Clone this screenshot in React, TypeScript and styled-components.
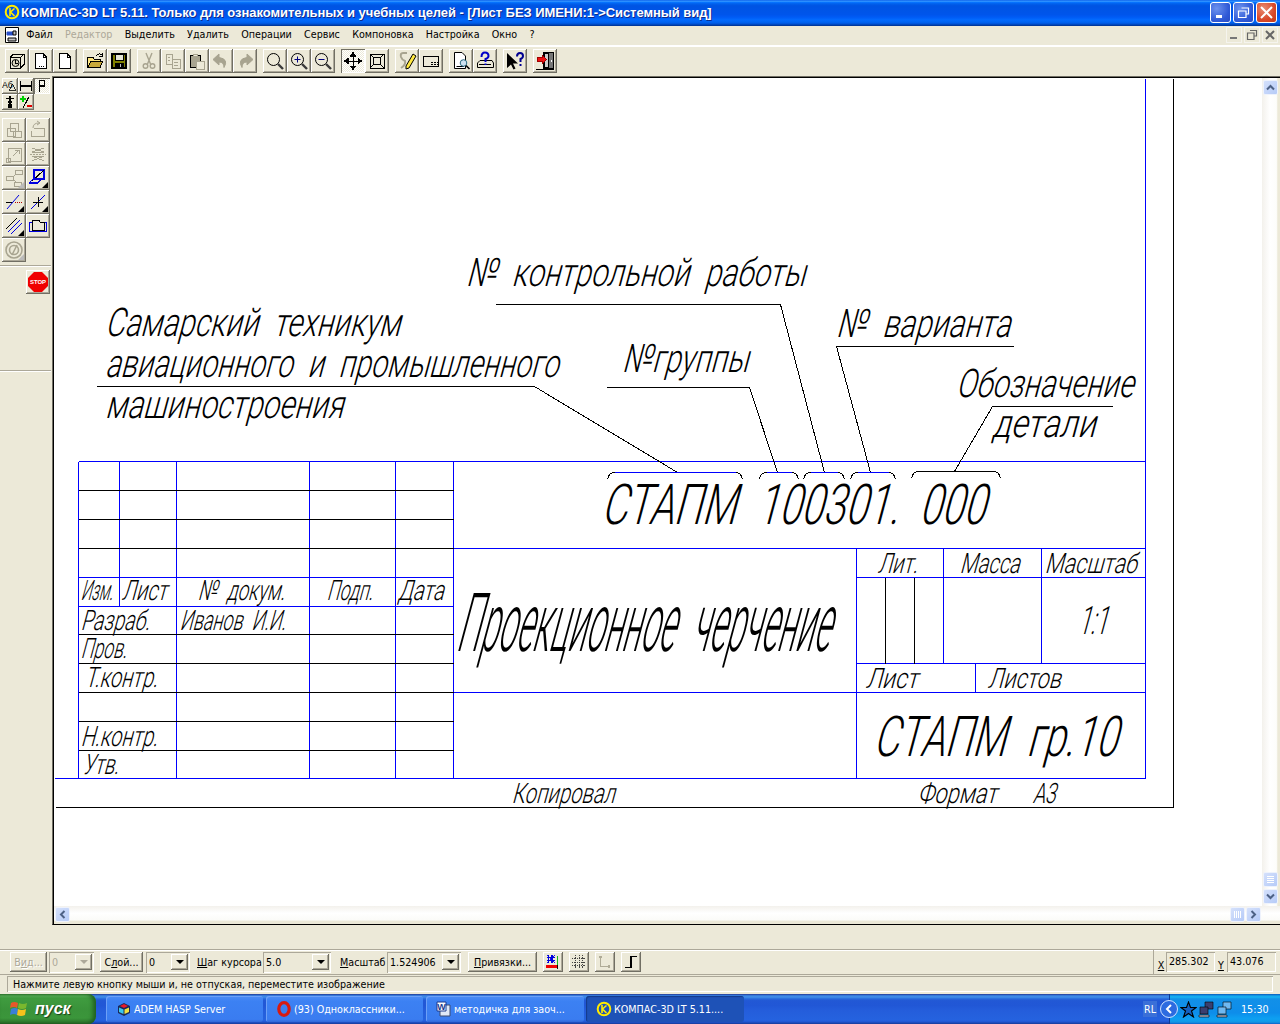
import React from "react";
import styled, { createGlobalStyle, css } from "styled-components";

const Global = createGlobalStyle`
  html, body { margin: 0; padding: 0; width: 1280px; height: 1024px; overflow: hidden; background: #ece9d8; }
`;

const UI = `"DejaVu Sans Condensed", "DejaVu Sans", "Liberation Sans", sans-serif`;

const Page = styled.div`
  width: 1280px; height: 1024px; display: flex; flex-direction: column; overflow: hidden;
  background: #ece9d8; color: #000; font-family: ${UI}; font-size: 10.65px;
`;

/* ---------- title bar ---------- */
const TitleBar = styled.header`
  height: 26px; flex: none; display: flex; align-items: center; padding: 0 3px 2px 4px; box-sizing: border-box;
  background: linear-gradient(#0058e6 0, #3a93ff 4%, #288eff 6%, #127dff 8%, #036ffc 10%, #0262ee 14%, #0057e5 20%, #0054e3 24%, #0055eb 56%, #005bf5 66%, #026afe 76%, #0062ef 86%, #0052d6 92%, #0040ab 96%, #003092 100%);
`;
const TitleText = styled.div`
  flex: 1; margin-left: 1px; color: #fff; font: bold 13px "Liberation Sans", sans-serif; letter-spacing: -0.06px;
  text-shadow: 1px 1px 0 #0f2a8a; white-space: nowrap;
`;
const WinButtons = styled.div`display: flex; gap: 2px;`;
const WinBtn = styled.div<{ $close?: boolean }>`
  width: 21px; height: 21px; box-sizing: border-box; border: 1px solid #fff; border-radius: 3px; display: flex; align-items: center; justify-content: center;
  background: ${(p) => (p.$close ? "radial-gradient(circle at 35% 30%, #e88d73, #d9492a 60%, #c33a17)" : "radial-gradient(circle at 30% 30%, #6d92ee, #2f59d6 65%, #2a4cc4)")};
`;

/* ---------- menu ---------- */
const MenuBar = styled.nav`
  height: 21px; flex: none; box-sizing: border-box; display: flex; align-items: center; padding: 0 2px 2px 5px; gap: 12.25px;
  border-bottom: 2px solid #fff;
`;
const MenuItem = styled.span<{ $off?: boolean; $ml?: number }>`
  color: ${(p) => (p.$off ? "#aca899" : "#000")}; margin-left: ${(p) => p.$ml ?? 0}px; white-space: nowrap;
`;
const MdiGroup = styled.div`margin-left: auto; display: flex; gap: 2px;`;
const MdiBtn = styled.div`
  width: 16px; height: 16px; display: flex; align-items: center; justify-content: center; box-shadow: inset 0 0 0 1px #f5f4ee;
`;

/* ---------- tool buttons ---------- */
const raised = css`box-shadow: inset -1px -1px 0 #716f64, inset 1px 1px 0 #fff, inset -2px -2px 0 #aca899;`;
const sunken = css`box-shadow: inset 1px 1px 0 #aca899, inset -1px -1px 0 #fff;`;
const dither = css`background: repeating-conic-gradient(#fff 0 25%, #ece9d8 0 50%) 0 0 / 2px 2px;`;

const ToolBar = styled.div`
  height: 29px; flex: none; box-sizing: border-box; padding: 2px 0 0 5px; display: flex; gap: 6px;
`;
const BtnGroup = styled.div`display: flex;`;
const IconBtn = styled.div<{ $on?: boolean; $w?: number; $h?: number; $corner?: string }>`
  position: relative; width: ${(p) => p.$w ?? 24}px; height: ${(p) => p.$h ?? 24}px; flex: none; display: flex; align-items: center; justify-content: center;
  background: #ece9d8; ${raised}
  ${(p) => p.$on && css`${dither} box-shadow: inset 1px 1px 0 #716f64, inset -1px -1px 0 #fff;`}
  ${(p) => p.$corner && css`&::after { content: ""; position: absolute; right: 2px; bottom: 2px; border: 3px solid transparent; border-right-color: ${p.$corner}; border-bottom-color: ${p.$corner}; }`}
`;

/* ---------- workspace ---------- */
const Workspace = styled.main`height: 849px; flex: none; display: flex;`;
const SidePanel = styled.aside`width: 52px; flex: none; padding-top: 2px; box-sizing: border-box; display: flex; flex-direction: column;`;
const TabGrid = styled.div`padding-left: 2px; display: grid; grid-template-columns: repeat(3, 16px); grid-auto-rows: 16px;`;
const PanelRule = styled.div<{ $top: number; $bottom: number }>`
  height: 2px; margin: ${(p) => p.$top}px 1px ${(p) => p.$bottom}px 0; background: linear-gradient(#aca899 50%, #fff 50%);
`;
const ToolGrid = styled.div`padding-left: 2px; display: grid; grid-template-columns: repeat(2, 24px); grid-auto-rows: 24px;`;
const StopRow = styled.div`padding-left: 26px; height: 100px; box-sizing: border-box;`;

const Canvas = styled.section`
  flex: 1; display: flex; flex-direction: column; background: #fff;
  border-left: 1px solid #716f64; border-top: 1px solid #716f64; border-bottom: 1px solid #000;
  box-shadow: inset 1px 1px 0 #000;
  padding: 1px 0 0 1px; min-width: 0;
`;
const CanvasTop = styled.div`flex: 1; display: flex; min-height: 0;`;
const Sheet = styled.svg`width: 1208px; height: 828px; flex: none; display: block; background: #fff;`;
const VScroll = styled.div`
  width: 18px; flex: none; box-sizing: border-box; padding: 2px 2px 2px 1px; display: flex; flex-direction: column; justify-content: space-between;
  background: linear-gradient(to right, #f3f1ec, #fff 45%, #fdfdfb 80%, #ece9d8 88%);
`;
const HScroll = styled.div`
  height: 18px; flex: none; box-sizing: border-box; padding: 1px 19px 3px 1px; display: flex;
  background: linear-gradient(#f3f1ec, #fff 40%, #fbfbf8 78%, #ece9d8 84%);
`;
const ScrollEnd = styled.div`display: flex; flex-direction: column; gap: 2px;`;
const ScrollEndH = styled.div`display: flex; margin-left: auto; gap: 1px;`;
const ScrollBtn = styled.div`
  width: 15px; height: 15px; border: 1px solid #eef2fc; border-radius: 2px; box-sizing: border-box; flex: none; display: flex; align-items: center; justify-content: center;
  background: linear-gradient(135deg, #d4e0fb, #b6cbf8);
`;

/* ---------- bottom bars ---------- */
const BlankBand = styled.div`height: 24px; flex: none;`;
const ParamBar = styled.div`
  height: 26px; flex: none; box-sizing: border-box; display: flex; align-items: center; padding-left: 10px;
  border-top: 1px solid #aca899; box-shadow: inset 0 1px 0 #fff;
  border-bottom: 1px solid #aca899;
`;
const TextBtn = styled.div<{ $w: number; $ml?: number; $off?: boolean }>`
  width: ${(p) => p.$w}px; margin-left: ${(p) => p.$ml ?? 0}px; height: 20px; box-sizing: border-box; flex: none;
  display: flex; align-items: center; justify-content: center; white-space: nowrap; ${raised}
  color: ${(p) => (p.$off ? "#aca899" : "#000")};
  ${(p) => p.$off && css`text-shadow: 1px 1px 0 #fff;`}
`;
const SmallBtn = styled(IconBtn)`margin-left: 6px; height: 20px; width: 20px;`;
const Combo = styled.div<{ $w: number; $ml?: number; $off?: boolean }>`
  width: ${(p) => p.$w}px; margin-left: ${(p) => p.$ml ?? 0}px; height: 21px; box-sizing: border-box; flex: none; display: flex; align-items: center; justify-content: space-between;
  padding: 2px 2px 2px 3px; ${sunken}
  color: ${(p) => (p.$off ? "#aca899" : "#000")}; white-space: nowrap;
`;
const ComboArrow = styled.div<{ $off?: boolean }>`
  width: 17px; height: 16px; ${raised} display: flex; align-items: center; justify-content: center;
  &::after { content: ""; border: 4px solid transparent; border-top: 4px solid ${(p) => (p.$off ? "#aca899" : "#000")}; border-bottom: 0; }
`;
const FieldLabel = styled.span<{ $w: number; $ml?: number }>`
  width: ${(p) => p.$w}px; margin-left: ${(p) => p.$ml ?? 0}px; flex: none; white-space: nowrap;
`;
const CoordGroup = styled.div`
  margin-left: auto; width: 127px; height: 24px; box-sizing: border-box; border-left: 1px solid #aca899; padding-left: 2px; display: flex; align-items: center;
`;
const CoordField = styled.div`
  width: 49px; height: 20px; box-sizing: border-box; flex: none; padding: 3px 3px; ${sunken}
`;
const CoordLabel = styled.span<{ $w: number }>`width: ${(p) => p.$w}px; flex: none; text-align: center; position: relative; top: 3px;`;
const StatusRow = styled.div`
  height: 19px; flex: none; box-sizing: border-box; padding: 1px 7px 2px 7px;
`;
const StatusField = styled.div`
  height: 16px; box-sizing: border-box; padding: 2px 6px; box-shadow: inset 1px 1px 0 #aca899, inset -1px -1px 0 #fff; white-space: nowrap;
`;

/* ---------- taskbar ---------- */
const TaskBar = styled.footer`
  height: 30px; flex: none; display: flex; align-items: center; color: #fff;
  background: linear-gradient(#1f2f86 0, #3165c4 3%, #3682e5 6%, #4490e6 10%, #3883e5 12%, #2b71e0 15%, #2663da 18%, #235bd6 20%, #2258d5 23%, #2157d6 38%, #245ddb 54%, #2562df 86%, #245fdc 89%, #2158d4 92%, #1d4ec0 95%, #1941a5 98%);
`;
const StartBtn = styled.div`
  width: 96px; height: 30px; flex: none; box-sizing: border-box; padding-left: 10px; display: flex; align-items: center; gap: 7px; border-radius: 0 8px 8px 0;
  background: linear-gradient(#388438 0, #5ab25a 6%, #409c40 14%, #3a933a 50%, #3b963b 80%, #2f7a2f 94%, #235a23 100%);
  box-shadow: inset -3px 0 4px #1f5f1f;
`;
const StartText = styled.span`
  font: italic bold 16px "Liberation Sans", sans-serif; color: #fff; text-shadow: 1px 1px 1px #18401a;
`;
const TaskBtn = styled.div<{ $active?: boolean; $ml: number; $w: number }>`
  width: ${(p) => p.$w}px; margin-left: ${(p) => p.$ml}px; height: 26px; flex: none; box-sizing: border-box; padding-left: 10px; display: flex; align-items: center; gap: 2px; border-radius: 3px; white-space: nowrap;
  background: ${(p) => (p.$active ? "#1e52b7" : "linear-gradient(#4d8ef5, #3c81f3 20%, #3a7cf0 90%, #3068d8)")};
  box-shadow: ${(p) => (p.$active ? "inset 1px 1px 1px #143a8a" : "inset 1px 1px 0 #6da0f7")};
`;
const LangBox = styled.div`
  margin-left: auto; width: 14px; height: 16px; display: flex; align-items: center; justify-content: center; background: #3a6fd8;
`;
const TrayChevron = styled.div`
  width: 18px; height: 18px; margin-left: 3px; margin-right: -9px; z-index: 1; flex: none; box-sizing: border-box; border: 1px solid #cfe2ff; border-radius: 50%; display: flex; align-items: center; justify-content: center; background: #2d6be0;
`;
const Tray = styled.div`
  width: 111px; height: 30px; flex: none; box-sizing: border-box; display: flex; align-items: center; padding-left: 10px; gap: 1px; border-left: 1px solid #0c3b97;
  background: linear-gradient(to bottom, #0c59b9, #139ee9 6%, #18b5f2 10%, #139beb 14%, #1290e8 19%, #0d8dea 63%, #0d9ff1 81%, #0f9eed 88%, #119be9 91%, #1392e2 94%, #137ed7 97%, #095bc9);
`;
const Clock = styled.span`margin-left: 7px;`;

/* ---------- drawing ---------- */
const DrawLine = styled.line<{ $c?: string }>`
  stroke: ${(p) => p.$c ?? "#000"}; stroke-width: 1; shape-rendering: crispEdges;
`;
const DrawPath = styled.path<{ $c?: string }>`
  stroke: ${(p) => p.$c ?? "#000"}; stroke-width: 1; fill: none; shape-rendering: crispEdges;
`;
const GostText = styled.text`
  font-family: Roboto, "Liberation Sans", sans-serif; font-weight: 300; fill: #000; white-space: pre; word-spacing: 0.28em;
`;

const BLUE = "#0000ff";
const STRETCH = 1.6;

type L = [number, number, number, number, string?];
const lines: L[] = [
  [1145, 78, 1145, 778, BLUE], [1173, 78, 1173, 807], [55, 807, 1173, 807], [54, 778, 1145, 778, BLUE],
  [78, 461, 1145, 461, BLUE], [78, 461, 78, 778, BLUE], [119, 461, 119, 606, BLUE],
  [176, 461, 176, 778, BLUE], [309, 461, 309, 778, BLUE], [395, 461, 395, 778, BLUE], [453, 461, 453, 778, BLUE],
  [78, 490, 453, 490], [78, 519, 453, 519], [78, 548, 453, 548], [453, 548, 1145, 548, BLUE],
  [78, 577, 453, 577, BLUE], [78, 606, 453, 606, BLUE],
  [78, 634, 453, 634], [78, 663, 453, 663], [78, 692, 453, 692], [78, 721, 453, 721], [78, 750, 453, 750],
  [453, 692, 1145, 692, BLUE], [856, 548, 856, 778, BLUE], [856, 577, 1145, 577, BLUE], [856, 663, 1145, 663, BLUE],
  [943, 548, 943, 663, BLUE], [1041, 548, 1041, 663, BLUE], [885, 577, 885, 663], [914, 577, 914, 663], [975, 663, 975, 692, BLUE],
  [96, 386, 534, 386], [534, 386, 677, 472],
  [495, 304, 780, 304], [780, 304, 824, 472],
  [606, 387, 749, 387], [749, 387, 777, 472],
  [836, 346, 1013, 346], [836, 346, 870, 472],
  [992, 406, 1112, 406], [992, 406, 954, 471],
];

const brackets: [number, number, number, boolean][] = [
  [607, 742, 472, true], [759, 798, 472, true], [803, 844, 472, true], [850, 895, 472, true], [911, 1000, 471, false],
];

type T = [string, number, number, number, number];
/* text, left, right, baseline, cap height */
const texts: T[] = [
  ["№ контрольной работы", 468, 810, 286, 28],
  ["Самарский техникум", 107, 405, 336, 28],
  ["авиационного и промышленного", 107, 563, 377, 28],
  ["машиностроения", 107, 348, 418, 28],
  ["№группы", 624, 753, 372, 28],
  ["№ варианта", 838, 1015, 337, 28],
  ["Обозначение", 958, 1138, 397, 28],
  ["детали", 994, 1100, 437, 28],
  ["СТАПМ 100301. 000", 604, 992, 524, 40],
  ["Изм.", 82, 116, 600, 20], ["Лист", 123, 170, 600, 20], ["№ докум.", 199, 288, 600, 20],
  ["Подп.", 328, 376, 600, 20], ["Дата", 399, 447, 600, 20],
  ["Разраб.", 82, 153, 630, 20], ["Иванов И.И.", 181, 289, 630, 20], ["Пров.", 82, 130, 658, 20],
  ["Т.контр.", 86, 161, 687, 20], ["Н.контр.", 82, 161, 746, 20], ["Утв.", 84, 122, 774, 20],
  ["Проекционное черчение", 460, 839, 651, 58],
  ["Лит.", 879, 921, 573, 20], ["Масса", 961, 1023, 573, 20], ["Масштаб", 1046, 1140, 573, 20], ["1:1", 1080, 1112, 634, 28],
  ["Лист", 867, 921, 688, 20], ["Листов", 989, 1064, 688, 20],
  ["СТАПМ гр.10", 876, 1124, 756, 40],
  ["Копировал", 513, 618, 803, 20], ["Формат", 919, 1000, 803, 20], ["А3", 1034, 1059, 803, 20],
];

function Drawing() {
  return (
    <Sheet viewBox="54 78 1208 828">
      {lines.map(([a, b, c, d, col], i) => (
        <DrawLine key={i} x1={a + 0.5} y1={b + 0.5} x2={c + 0.5} y2={d + 0.5} $c={col} />
      ))}
      {brackets.map(([a, b, y, blue], i) => (
        <g key={i} transform="translate(0.5 0.5)">
          <DrawPath d={`M${a} ${y + 7}Q${a + 1} ${y} ${a + 7} ${y}`} />
          <DrawPath d={`M${b - 7} ${y}Q${b - 1} ${y} ${b} ${y + 7}`} />
          <DrawPath d={`M${a + 7} ${y}H${b - 7}`} $c={blue ? BLUE : "#000"} />
        </g>
      ))}
      {texts.map(([s, x1, x2, base, cap], i) => (
        <GostText
          key={i}
          transform={`translate(${x1 - cap * 0.08} ${base}) skewX(-15) scale(1 ${STRETCH})`}
          fontSize={cap / 0.711 / STRETCH}
          textLength={x2 - x1 - cap * 0.1}
          lengthAdjust="spacingAndGlyphs"
        >
          {s}
        </GostText>
      ))}
    </Sheet>
  );
}

/* ---------- icons ---------- */
const Svg = ({ children, s = 20 }: { children: React.ReactNode; s?: number }) => (
  <svg width={s} height={s} viewBox="0 0 20 20" fill="none" stroke="#000" strokeWidth="1" shapeRendering="crispEdges">
    {children}
  </svg>
);
const GR = "#a8a490";

const KompasLogo = ({ s = 16 }: { s?: number }) => (
  <svg width={s} height={s} viewBox="0 0 16 16" fill="none">
    <circle cx="8" cy="8" r="6.3" stroke="#ffec00" strokeWidth="2" />
    <path d="M6 4v8M10.5 4.5L6.5 8l4 4" stroke="#ffec00" strokeWidth="1.6" />
  </svg>
);

const icons: Record<string, React.ReactNode> = {
  model: (
    <Svg>
      <path d="M3 6.5L6.5 3H17V13.5L13.5 17H3Z" fill="#ece9d8" />
      <path d="M3 6.5H13.5V17M13.5 6.5L17 3" />
      <circle cx="8.5" cy="12" r="3.5" fill="#d8d4c0" stroke="#000" shapeRendering="auto" />
      <path d="M8.5 12V9M8.5 12L11 13" />
    </Svg>
  ),
  sheet: (
    <Svg>
      <path d="M4.5 2.5H12L15.5 6V17.5H4.5Z" fill="#fff" />
      <path d="M12 2.5V6H15.5" />
      <path d="M8 15.5H14" strokeDasharray="1 1" />
    </Svg>
  ),
  blank: (
    <Svg>
      <path d="M4.5 2.5H12L15.5 6V17.5H4.5Z" fill="#fff" />
      <path d="M12 2.5V6H15.5" />
    </Svg>
  ),
  open: (
    <Svg>
      <path d="M2.5 6.5H8L9 8H15V10H6L2.5 16.5Z" fill="#ffe680" />
      <path d="M2.5 16.5L6 10H18L15 16.5Z" fill="#c9a93a" />
      <path d="M11 5Q14 1.5 17 4M17 2V5H14" stroke="#000" />
    </Svg>
  ),
  save: (
    <Svg>
      <path d="M3 3H17V17H3Z" fill="#808000" stroke="#000" strokeWidth="1.4" />
      <path d="M6 3.5H14V9H6Z" fill="#e8e8d8" />
      <path d="M6 12H14V17H6Z" fill="#000" />
      <path d="M11 13V16" stroke="#c0c0c0" />
    </Svg>
  ),
  cut: (
    <Svg>
      <g stroke={GR} shapeRendering="auto" strokeWidth="1.4">
        <path d="M7 2L11.5 13M13 2L8.5 13" />
        <circle cx="6.5" cy="15" r="2.3" />
        <circle cx="13.5" cy="15" r="2.3" />
      </g>
    </Svg>
  ),
  copy: (
    <Svg>
      <g stroke={GR}>
        <path d="M3 3H9V13H3Z" />
        <path d="M9 8H17V17H9Z" />
        <path d="M5 6H7M5 9H7M11 11H15M11 14H15" />
      </g>
    </Svg>
  ),
  paste: (
    <Svg>
      <path d="M3 4H13V16H3Z" fill={GR} />
      <path d="M6 3H10V5H6Z" fill="#ece9d8" stroke={GR} />
      <path d="M9 10H17V18H9Z" fill="#ece9d8" stroke={GR} />
    </Svg>
  ),
  undo: (
    <Svg>
      <path d="M8 3L2 8.5L8 14V11Q13 11 13 16.5Q18 8 8 6.5Z" fill={GR} stroke={GR} shapeRendering="auto" />
    </Svg>
  ),
  redo: (
    <Svg>
      <path d="M12 3L18 8.5L12 14V11Q7 11 7 16.5Q2 8 12 6.5Z" fill={GR} stroke={GR} shapeRendering="auto" />
    </Svg>
  ),
  zoom: (
    <svg width="20" height="20" viewBox="0 0 20 20" fill="none" stroke="#000">
      <circle cx="8.5" cy="8.5" r="6" />
      <path d="M13 13L18 18" strokeWidth="2.4" stroke="#3a3a3a" />
    </svg>
  ),
  zoomin: (
    <svg width="20" height="20" viewBox="0 0 20 20" fill="none" stroke="#000">
      <circle cx="8.5" cy="8.5" r="6" />
      <path d="M5.5 8.5H11.5M8.5 5.5V11.5" stroke="#000080" />
      <path d="M13 13L18 18" strokeWidth="2.4" stroke="#3a3a3a" />
    </svg>
  ),
  zoomout: (
    <svg width="20" height="20" viewBox="0 0 20 20" fill="none" stroke="#000">
      <circle cx="8.5" cy="8.5" r="6" />
      <path d="M5.5 8.5H11.5" stroke="#000080" />
      <path d="M13 13L18 18" strokeWidth="2.4" stroke="#3a3a3a" />
    </svg>
  ),
  move: (
    <Svg>
      <path d="M10 2V18M2 10H18" strokeWidth="1" />
      <path d="M10 1.5L7.5 5H12.5ZM10 18.5L7.5 15H12.5ZM1.5 10L5 7.5V12.5ZM18.5 10L15 7.5V12.5Z" fill="#000" />
    </Svg>
  ),
  fit: (
    <Svg>
      <path d="M3 3H17V17H3Z" />
      <path d="M6.5 6.5H13.5V13.5H6.5Z" />
      <path d="M3 3L6.5 6.5M17 3L13.5 6.5M3 17L6.5 13.5M17 17L13.5 13.5" />
    </Svg>
  ),
  pencil: (
    <svg width="20" height="20" viewBox="0 0 20 20" fill="none">
      <path d="M10 2H6Q3 2 4 6Q5 9 8 10Q9 14 4 17" stroke={GR} strokeWidth="2" />
      <path d="M9 15L16 3L19 5L12 17L9 18Z" fill="#ffe840" stroke="#000" />
    </svg>
  ),
  layout: (
    <Svg>
      <path d="M2.5 5.5H17.5V15.5H2.5Z" />
      <path d="M10 13.5H17M10 11.5H17" strokeDasharray="2 1" />
    </Svg>
  ),
  preview: (
    <svg width="20" height="20" viewBox="0 0 20 20" fill="none" stroke="#000">
      <path d="M3.5 1.5H11L14.5 5V17.5H3.5Z" fill="#fff" />
      <path d="M5.5 15.5H13" />
      <circle cx="12.5" cy="12" r="3.3" fill="#cfe3f2" stroke="#2a6a80" />
      <path d="M15 14.5L18.5 18" strokeWidth="1.6" />
    </svg>
  ),
  printhelp: (
    <svg width="20" height="20" viewBox="0 0 20 20" fill="none" stroke="#000">
      <path d="M2.5 12L5 9.5H17L18.5 12V16.5H2.5Z" fill="#ece9d8" />
      <path d="M4 13.5H16" />
      <path d="M6.5 6Q6.5 1.5 10 1.5Q13.5 1.5 13.5 5Q13.5 7 10.5 8V11M10.5 12.5V14" stroke="#0000c8" strokeWidth="2" />
    </svg>
  ),
  whatis: (
    <svg width="20" height="20" viewBox="0 0 20 20" fill="none">
      <path d="M2 2V17L6 13.5L8.5 18.5L10.5 17.5L8 12.5H13Z" fill="#000" />
      <path d="M12 5.5Q12 2 15 2Q18 2 18 5Q18 7 15.5 8V11M15.5 13V15" stroke="#000090" strokeWidth="2" />
    </svg>
  ),
  exit: (
    <svg width="20" height="20" viewBox="0 0 20 20" fill="none" stroke="#000" shapeRendering="crispEdges">
      <path d="M8 1.5H18.5V17.5H8Z" fill="#777" />
      <path d="M9 2.5H13V16H9Z" fill="#ccc" />
      <path d="M16.5 9V11" stroke="#fff" />
      <path d="M1 18.5H19" />
      <path d="M2 6.5H7V4L11.5 8.5L7 13V10.5H2Z" fill="#ee1010" stroke="#a00000" />
    </svg>
  ),
  /* side panel */
  t1: (
    <Svg s={16}>
      <text x="0" y="13" fontSize="11" fontFamily="Liberation Sans" fill="#000" stroke="none">Аб</text>
      <path d="M9 15L13 8L17 15Z" />
    </Svg>
  ),
  t2: (
    <Svg s={16}>
      <path d="M3 4V16M17 4V16M3 10H17" strokeWidth="1.6" />
    </Svg>
  ),
  t3: (
    <Svg s={16}>
      <path d="M7 3V17M7 3.5H13V10H7" strokeWidth="1.5" />
    </Svg>
  ),
  t4: (
    <Svg s={16}>
      <path d="M10 2V17M5 6H15M7 10H13" strokeWidth="1.5" />
      <path d="M8 13H12V17H8Z" fill="#000" />
    </Svg>
  ),
  t5: (
    <Svg s={16}>
      <path d="M6 2V10M2 6H10" stroke="#00d000" strokeWidth="3" />
      <path d="M6 18L14 3" strokeWidth="1.3" />
      <path d="M11 15H18" stroke="#e00000" strokeWidth="2.4" />
    </Svg>
  ),
  s1: (
    <Svg>
      <path d="M6 3H14V11H6ZM3 8H11V16H3ZM9 11H17V17H9Z" stroke={GR} />
    </Svg>
  ),
  s2: (
    <Svg>
      <path d="M6 8H16V16H3V11" stroke={GR} />
      <path d="M5 8Q5 3 11 3M9 1L12 3L9 5" stroke={GR} shapeRendering="auto" />
    </Svg>
  ),
  s3: (
    <Svg>
      <path d="M4 4H17V17H4Z M9 12L15 6M11 6H15V10" stroke={GR} />
      <path d="M2 14H6V18H2Z" stroke={GR} />
    </Svg>
  ),
  s4: (
    <Svg>
      <path d="M4 4L16 8H4L16 4M4 17L16 12H4L16 17" stroke={GR} />
      <path d="M2 10H18" stroke={GR} strokeDasharray="2 1" />
    </Svg>
  ),
  s5: (
    <Svg>
      <path d="M11 2H18V6H11ZM2 8H9V12H2ZM10 14H17V18H10ZM9 9L12 6M9 11L12 14" stroke={GR} />
    </Svg>
  ),
  s6: (
    <Svg>
      <path d="M6 2H16V11H6Z" stroke="#0000e0" strokeWidth="1.4" />
      <path d="M16 2L4 13" stroke="#000" />
      <path d="M2 14L5 11H13L10 15H2Z" stroke="#0000e0" strokeWidth="1.4" />
    </Svg>
  ),
  s7: (
    <Svg>
      <path d="M2 10H9" stroke="#000" />
      <path d="M11 10H19" stroke="#b00000" strokeDasharray="1 1" />
      <path d="M3 17L15 3" stroke="#0000e0" shapeRendering="auto" />
    </Svg>
  ),
  s8: (
    <Svg>
      <path d="M3 17L17 3" stroke="#0000e0" shapeRendering="auto" />
      <path d="M10 5V15M5 10H15" stroke="#000" />
    </Svg>
  ),
  s9: (
    <Svg>
      <path d="M2 13L13 2" stroke="#000" shapeRendering="auto" />
      <path d="M4 16L16 4M7 18L18 7" stroke="#0000e0" shapeRendering="auto" />
    </Svg>
  ),
  s10: (
    <Svg>
      <path d="M1.5 6.5H18.5V15.5H1.5Z" stroke="#0000e0" />
      <path d="M4 4H11L12 6H16V14H4Z" stroke="#000" fill="#ece9d8" />
    </Svg>
  ),
  s11: (
    <svg width="20" height="20" viewBox="0 0 20 20" fill="none" stroke={GR} strokeWidth="1.6">
      <circle cx="10" cy="10" r="8" />
      <circle cx="10" cy="10" r="4.5" />
      <path d="M13 5L8 15" />
    </svg>
  ),
  stop: (
    <svg width="20" height="20" viewBox="0 0 20 20">
      <path d="M6 0H14L20 6V14L14 20H6L0 14V6Z" fill="#f00000" />
      <text x="10" y="12" textAnchor="middle" fontSize="6" fontWeight="bold" fontFamily="Liberation Sans" fill="#fff">STOP</text>
    </svg>
  ),
  snap: (
    <Svg s={18}>
      <path d="M3 8H12M3 5H12M5 2V11M9 2V11" stroke="#0000e0" strokeWidth="1.4" />
      <path d="M3 2L12 11M12 2L3 11" stroke="#0000e0" />
      <path d="M15 3V17" stroke="#00b000" />
      <path d="M2 15H16" stroke="#f00000" strokeWidth="2.4" />
      <path d="M15 13V18" stroke="#000" />
    </Svg>
  ),
  grid: (
    <Svg s={18}>
      <path d="M2 6H18M2 10H18M2 14H18M6 2V18M10 2V18M14 2V18" stroke="#333" strokeDasharray="1 1" />
    </Svg>
  ),
  axes: (
    <Svg s={18}>
      <path d="M5 3V15H16" stroke={GR} />
      <path d="M3 6L5 3L7 6M13 13L16 15L13 17" stroke={GR} />
    </Svg>
  ),
  step: (
    <Svg s={18}>
      <path d="M3 16H10V4H17" strokeWidth="1.4" />
    </Svg>
  ),
};

const Ic = ({ n }: { n: string }) => <>{icons[n]}</>;

const TBGroups: { n: string; on?: boolean }[][] = [
  [{ n: "model" }, { n: "sheet" }, { n: "blank" }],
  [{ n: "open" }, { n: "save" }],
  [{ n: "cut" }, { n: "copy" }, { n: "paste" }, { n: "undo" }, { n: "redo" }],
  [{ n: "zoom" }, { n: "zoomin" }, { n: "zoomout" }],
  [{ n: "move", on: true }, { n: "fit" }],
  [{ n: "pencil" }, { n: "layout" }],
  [{ n: "preview" }, { n: "printhelp" }],
  [{ n: "whatis" }],
  [{ n: "exit" }],
];

const menu = ["Файл", "Редактор", "Выделить", "Удалить", "Операции", "Сервис", "Компоновка", "Настройка", "Окно", "?"];
const side: [string, string?][] = [
  ["s1"], ["s2"], ["s3"], ["s4"], ["s5", "#bbb"], ["s6", "#000"], ["s7", "#000"], ["s8", "#000"], ["s9", "#000"], ["s10"], ["s11", "#bbb"],
];

const NetIcon = ({ c }: { c: string }) => (
  <svg width="17" height="17" viewBox="0 0 17 17" stroke="#000" strokeWidth="0.6">
    <path d="M7 1H15V8H7Z" fill={c} />
    <path d="M2 6H10V13H2Z" fill={c} />
    <path d="M1 14H11V16H1Z" fill="#b8b8c8" />
  </svg>
);

export default function App() {
  return (
    <Page>
      <Global />
      <TitleBar>
        <KompasLogo />
        <TitleText>КОМПАС-3D LT 5.11. Только для ознакомительных и учебных целей - [Лист БЕЗ ИМЕНИ:1-&gt;Системный вид]</TitleText>
        <WinButtons>
          <WinBtn>
            <svg width="13" height="13" viewBox="0 0 13 13"><path d="M2 9H8V12H2Z" fill="#fff" /></svg>
          </WinBtn>
          <WinBtn>
            <svg width="13" height="13" viewBox="0 0 13 13" fill="none" stroke="#fff" strokeWidth="1.2"><path d="M4.5 2H11.5V8H9M1.5 5H9V11.5H1.5Z" /></svg>
          </WinBtn>
          <WinBtn $close>
            <svg width="13" height="13" viewBox="0 0 13 13" stroke="#fff" strokeWidth="2"><path d="M1 1L12 12M12 1L1 12" /></svg>
          </WinBtn>
        </WinButtons>
      </TitleBar>
      <MenuBar>
        <svg width="14" height="16" viewBox="0 0 14 16" stroke="#000" fill="#fff">
          <path d="M.5.5H13.5V15.5H.5Z" />
          <path d="M2 5H8V8H2Z" fill="#2a50c8" stroke="#2a50c8" />
          <path d="M8 4H11V8H8ZM3 11H11V14H3Z" fill="#c0c0c0" />
        </svg>
        {menu.map((m, i) => (
          <MenuItem key={m} $off={m === "Редактор"} $ml={i === 0 ? -5 : 0}>{m}</MenuItem>
        ))}
        <MdiGroup>
          <MdiBtn><svg width="12" height="12" viewBox="0 0 12 12"><path d="M2 8H9V10H2Z" fill="#777" /></svg></MdiBtn>
          <MdiBtn><svg width="12" height="12" viewBox="0 0 12 12" fill="none" stroke="#666" strokeWidth="1.2"><path d="M4 1.5H10.5V7H8.5M1.5 4H8V10.5H1.5Z" /></svg></MdiBtn>
          <MdiBtn><svg width="12" height="12" viewBox="0 0 12 12" stroke="#666" strokeWidth="2"><path d="M2 2L10 10M10 2L2 10" /></svg></MdiBtn>
        </MdiGroup>
      </MenuBar>
      <ToolBar>
        {TBGroups.map((g, i) => (
          <BtnGroup key={i}>
            {g.map((b) => (
              <IconBtn key={b.n} $on={b.on}><Ic n={b.n} /></IconBtn>
            ))}
          </BtnGroup>
        ))}
      </ToolBar>
      <Workspace>
        <SidePanel>
          <TabGrid>
            <IconBtn $w={16} $h={16}><Ic n="t1" /></IconBtn>
            <IconBtn $w={16} $h={16}><Ic n="t2" /></IconBtn>
            <IconBtn $w={16} $h={16} $on><Ic n="t3" /></IconBtn>
            <IconBtn $w={16} $h={16}><Ic n="t4" /></IconBtn>
            <IconBtn $w={16} $h={16}><Ic n="t5" /></IconBtn>
          </TabGrid>
          <PanelRule $top={1} $bottom={5} />
          <ToolGrid>
            {side.map(([n, corner]) => (
              <IconBtn key={n} $corner={corner}><Ic n={n} /></IconBtn>
            ))}
          </ToolGrid>
          <PanelRule $top={3} $bottom={3} />
          <StopRow>
            <IconBtn><Ic n="stop" /></IconBtn>
          </StopRow>
          <PanelRule $top={0} $bottom={0} />
        </SidePanel>
        <Canvas>
          <CanvasTop>
            <Drawing />
            <VScroll>
              <ScrollBtn>
                <svg width="9" height="7" viewBox="0 0 9 7" fill="none" stroke="#4d6185" strokeWidth="2"><path d="M1 5.5L4.5 2L8 5.5" /></svg>
              </ScrollBtn>
              <ScrollEnd>
                <ScrollBtn>
                  <svg width="9" height="9" viewBox="0 0 9 9" stroke="#fff"><path d="M1 1.5H8M1 3.5H8M1 5.5H8M1 7.5H8" /></svg>
                </ScrollBtn>
                <ScrollBtn>
                  <svg width="9" height="7" viewBox="0 0 9 7" fill="none" stroke="#4d6185" strokeWidth="2"><path d="M1 1.5L4.5 5L8 1.5" /></svg>
                </ScrollBtn>
              </ScrollEnd>
            </VScroll>
          </CanvasTop>
          <HScroll>
            <ScrollBtn>
              <svg width="7" height="9" viewBox="0 0 7 9" fill="none" stroke="#4d6185" strokeWidth="2"><path d="M5.5 1L2 4.5L5.5 8" /></svg>
            </ScrollBtn>
            <ScrollEndH>
              <ScrollBtn>
                <svg width="9" height="9" viewBox="0 0 9 9" stroke="#fff"><path d="M1.5 1V8M3.5 1V8M5.5 1V8M7.5 1V8" /></svg>
              </ScrollBtn>
              <ScrollBtn>
                <svg width="7" height="9" viewBox="0 0 7 9" fill="none" stroke="#4d6185" strokeWidth="2"><path d="M1.5 1L5 4.5L1.5 8" /></svg>
              </ScrollBtn>
            </ScrollEndH>
          </HScroll>
        </Canvas>
      </Workspace>
      <BlankBand />
      <ParamBar>
        <TextBtn $w={37} $off>В<u>и</u>д...</TextBtn>
        <Combo $w={45} $ml={2} $off>0<ComboArrow $off /></Combo>
        <TextBtn $w={43} $ml={6}>С<u>л</u>ой...</TextBtn>
        <Combo $w={44} $ml={3}>0<ComboArrow /></Combo>
        <FieldLabel $w={66} $ml={7}><u>Ш</u>аг курсора</FieldLabel>
        <Combo $w={68}>5.0<ComboArrow /></Combo>
        <FieldLabel $w={47} $ml={9}><u>М</u>асштаб</FieldLabel>
        <Combo $w={74}>1.524906<ComboArrow /></Combo>
        <TextBtn $w={69} $ml={7}><u>П</u>ривязки...</TextBtn>
        <SmallBtn><Ic n="snap" /></SmallBtn>
        <SmallBtn><Ic n="grid" /></SmallBtn>
        <SmallBtn><Ic n="axes" /></SmallBtn>
        <SmallBtn><Ic n="step" /></SmallBtn>
        <CoordGroup>
          <CoordLabel $w={10}><u>X</u></CoordLabel>
          <CoordField>285.302</CoordField>
          <CoordLabel $w={12}><u>Y</u></CoordLabel>
          <CoordField>43.076</CoordField>
        </CoordGroup>
      </ParamBar>
      <StatusRow>
        <StatusField>Нажмите левую кнопку мыши и, не отпуская, переместите изображение</StatusField>
      </StatusRow>
      <TaskBar>
        <StartBtn>
          <svg width="18" height="18" viewBox="0 0 18 18">
            <path d="M1 3Q4 1 8 3L7 8Q4 6 0 8Z" fill="#e8572a" />
            <path d="M9 3Q13 5 17 3L16 8Q12 10 8 8Z" fill="#7ab82e" />
            <path d="M0 9Q4 7 7 9L6 15Q3 13 -1 15Z" fill="#3b7fd6" transform="translate(1 0)" />
            <path d="M8 9Q12 11 16 9L15 15Q11 17 7 15Z" fill="#f6c21c" />
          </svg>
          <StartText>пуск</StartText>
        </StartBtn>
        <TaskBtn $ml={10} $w={157}>
          <svg width="16" height="16" viewBox="0 0 16 16">
            <path d="M2 5L8 2L14 5V12L8 15L2 12Z" fill="#1b2a5a" />
            <path d="M4 5L8 3L12 5L8 7Z" fill="#e81a2a" />
            <path d="M3 6.5L7.5 8.5V13L3 11Z" fill="#38c8f0" />
            <path d="M8.5 8.5L13 6.5V11L8.5 13Z" fill="#f0e040" />
          </svg>
          ADEM HASP Server
        </TaskBtn>
        <TaskBtn $ml={3} $w={157}>
          <svg width="16" height="16" viewBox="0 0 16 16" fill="none">
            <ellipse cx="8" cy="8" rx="5.2" ry="6.3" stroke="#d81a10" strokeWidth="3.2" />
          </svg>
          (93) Одноклассники...
        </TaskBtn>
        <TaskBtn $ml={3} $w={158}>
          <svg width="16" height="16" viewBox="0 0 16 16">
            <path d="M4 4H14V15H4Z" fill="#dfe8f8" stroke="#3a4a70" />
            <path d="M1 1H10V10H1Z" fill="#fff" stroke="#1a3a90" />
            <text x="5.5" y="9" textAnchor="middle" fontSize="9" fontWeight="bold" fontFamily="Liberation Sans" fill="#1a3a90">W</text>
          </svg>
          методичка для заоч...
        </TaskBtn>
        <TaskBtn $ml={2} $w={158} $active>
          <KompasLogo />
          КОМПАС-3D LT 5.11....
        </TaskBtn>
        <LangBox>RL</LangBox>
        <TrayChevron>
          <svg width="8" height="10" viewBox="0 0 8 10" fill="none" stroke="#fff" strokeWidth="2"><path d="M6 1L2 5L6 9" /></svg>
        </TrayChevron>
        <Tray>
          <svg width="17" height="17" viewBox="0 0 17 17">
            <path d="M8.5 1L10.5 6.5H16L11.5 10L13.5 16L8.5 12.5L3.5 16L5.5 10L1 6.5H6.5Z" fill="#1360c0" stroke="#000" strokeWidth="1.1" />
          </svg>
          <NetIcon c="#3a3f70" />
          <NetIcon c="#6fb8f0" />
          <Clock>15:30</Clock>
        </Tray>
      </TaskBar>
    </Page>
  );
}
